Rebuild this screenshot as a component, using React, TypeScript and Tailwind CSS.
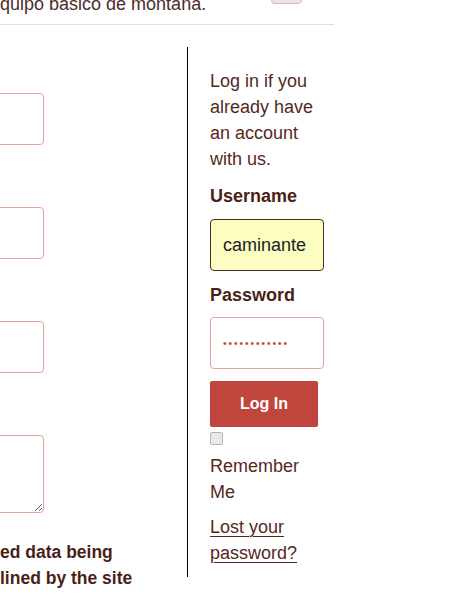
export default function App() {
  return (
    <div className="h-[606px] w-[462px] overflow-hidden bg-white font-['Liberation_Sans',Arial,sans-serif] text-[#56281c]">
      {/* tail of the previous section */}
      <div className="relative flex h-[25px] w-[334px] flex-col border-b border-[#f6d6d4]">
        <p className="-mt-[9px] whitespace-nowrap text-[18px] leading-[26px] text-[#4d2c2a]">
          quipo básico de montaña.
        </p>
        <div className="absolute left-[271px] top-[-10px] h-[14px] w-[31px] rounded-[4px] border border-[#e2b3b0] bg-[#e8e6e6]" />
      </div>

      <div className="mt-[22px] flex">
        {/* left column: register form, mostly scrolled off */}
        <div className="flex w-[187px] flex-col">
          <input className="mt-[46px] -ml-[56px] h-[52px] w-[100px] rounded-[4px] border border-[#e8a29c] bg-white outline-none" />
          <input className="mt-[62px] -ml-[56px] h-[52px] w-[100px] rounded-[4px] border border-[#e8a29c] bg-white outline-none" />
          <input className="mt-[62px] -ml-[56px] h-[52px] w-[100px] rounded-[4px] border border-[#e8a29c] bg-white outline-none" />
          <textarea className="mt-[62px] -ml-[56px] h-[78px] w-[100px] rounded-[4px] border border-[#e8a29c] bg-white outline-none" />
          <div className="mt-[26px] whitespace-nowrap text-[17.5px] font-bold leading-[26px] text-[#4a1f17]">
            <div>ed data being</div>
            <div>lined by the site</div>
          </div>
        </div>

        {/* right column: login */}
        <div className="h-[530px] border-l border-black pl-[22px] pt-[21px]">
          <div className="w-[114px]">
            <p className="text-[18px] leading-[26px]">Log in if you already have an account with us.</p>

            <label className="mt-[11px] block text-[18px] font-bold leading-[26px] text-[#4a1f17]">Username</label>
            <input
              readOnly
              value="caminante"
              className="mt-[10px] block h-[52px] w-[114px] rounded-[4px] border border-[#4a2a1a] bg-[#fbfdc1] pl-[12px] text-[18px] text-[#222] outline-none"
            />

            <label className="mt-[11px] block text-[18px] font-bold leading-[26px] text-[#4a1f17]">Password</label>
            <input
              readOnly
              type="password"
              value="caminante123"
              className="mt-[9px] block h-[52px] w-[114px] rounded-[4px] border border-[#e8a29c] bg-white pl-[12px] text-[10px] tracking-[2px] text-[#c0453c] outline-none"
            />

            <button className="mt-[12px] block h-[46px] w-[108px] rounded-[2px] bg-[#c0453c] text-[16px] font-bold text-white">
              Log In
            </button>

            <input
              type="checkbox"
              className="m-0 mt-[5px] block h-[13px] w-[13px] appearance-none rounded-[2px] border border-[#b5b5b5] bg-[#e9e9e9]"
            />
            <p className="mt-[8px] text-[18px] leading-[26px]">Remember<br />Me</p>

            <a href="#" className="mt-[9px] block text-[18px] leading-[26px] underline decoration-1 underline-offset-[3px]">
              Lost your password?
            </a>
          </div>
        </div>
      </div>
    </div>
  );
}
